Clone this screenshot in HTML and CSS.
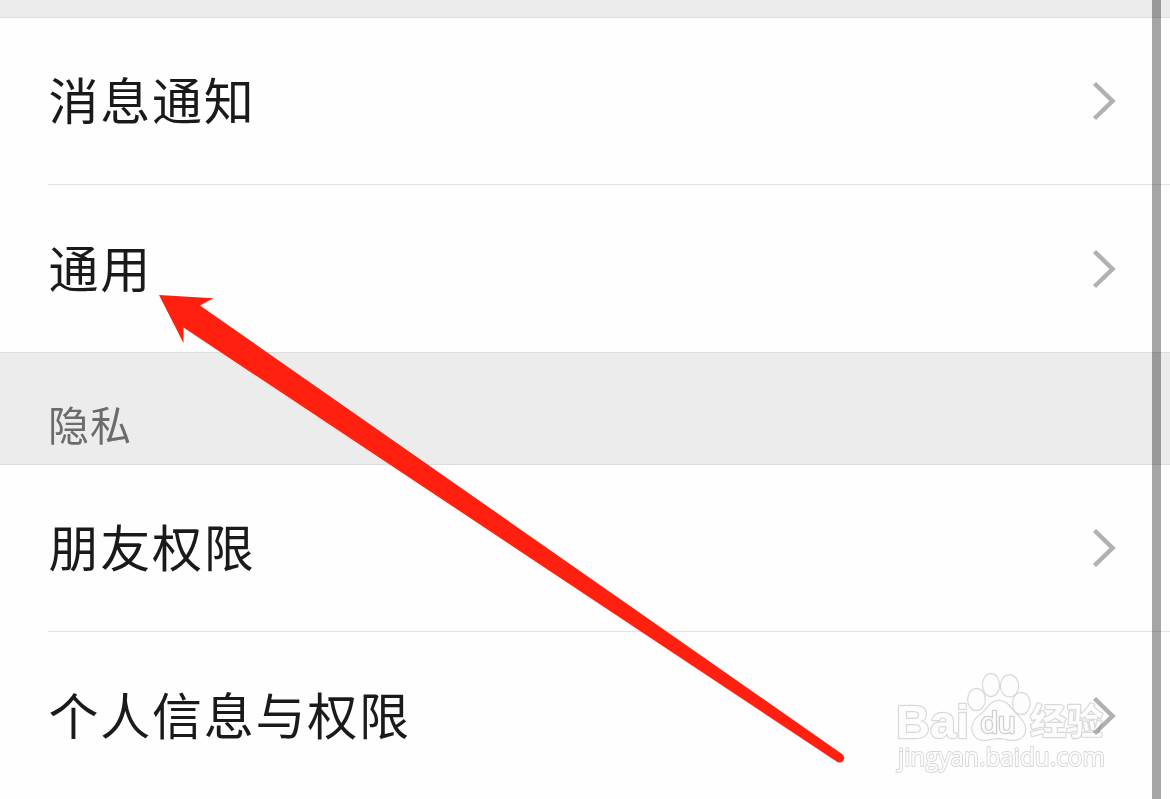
FILE: index.html
```html
<!DOCTYPE html>
<html lang="zh-CN">
<head>
  <meta charset="UTF-8" />
  <meta name="viewport" content="width=device-width, initial-scale=1.0"/>
  <title>设置</title>
  <link rel="stylesheet" href="styles.css">
</head>
<body>

  <div class="gap"></div>

  <ul class="list">
    <li class="row">
      <span class="label">消息通知</span>
      <svg class="chevron" viewBox="0 0 24 40"><path d="M2.5 2.5 L20.5 20 L2.5 37.5"/></svg>
    </li>
    <li class="row">
      <span class="label">通用</span>
      <svg class="chevron" viewBox="0 0 24 40"><path d="M2.5 2.5 L20.5 20 L2.5 37.5"/></svg>
    </li>
  </ul>

  <h2 class="section-title">隐私</h2>

  <ul class="list">
    <li class="row">
      <span class="label">朋友权限</span>
      <svg class="chevron" viewBox="0 0 24 40"><path d="M2.5 2.5 L20.5 20 L2.5 37.5"/></svg>
    </li>
    <li class="row">
      <span class="label">个人信息与权限</span>
      <svg class="chevron" viewBox="0 0 24 40"><path d="M2.5 2.5 L20.5 20 L2.5 37.5"/></svg>
    </li>
  </ul>

  <div class="scrollbar"></div>

  <!-- Pointer arrow -->
  <svg class="arrow" viewBox="0 0 1170 799">
    <path d="M159 295 L213.500 298.300 L200 305.500 L842 754 A4.500 4.500 0 0 1 837 761.800 L183.500 327.500 L183.500 343 Z"/>
  </svg>

  <!-- Watermark -->
  <svg class="watermark" viewBox="880 660 290 139">
    <text class="brand" x="896" y="738" textLength="73" lengthAdjust="spacingAndGlyphs">Bai</text>
    <g class="paw">
      <ellipse cx="976.500" cy="699.500" rx="8.300" ry="10.500"/>
      <ellipse cx="991" cy="685" rx="8" ry="11"/>
      <ellipse cx="1009.500" cy="685.800" rx="8.500" ry="10.500"/>
      <ellipse cx="1021.300" cy="703.500" rx="8.200" ry="10.500"/>
      <path d="M998.500 701 C991 701 988 708 983 713 C978 717 972 721 972.500 729 C973 738 981 741 988 739.500 C996 737.500 1002 737.500 1009 739.500 C1017 741 1024.500 738 1025 730 C1025.500 722 1019 718 1014 712 C1009 706 1006 701 998.500 701 Z"/>
    </g>
    <text class="du" x="980.500" y="733" textLength="35" lengthAdjust="spacingAndGlyphs">du</text>
    <text class="cn" x="1030" y="735" textLength="73" lengthAdjust="spacingAndGlyphs">经验</text>
    <text class="url" x="898" y="766" textLength="207" lengthAdjust="spacingAndGlyphs">jingyan.baidu.com</text>
  </svg>

</body>
</html>
```
FILE: styles.css
```css
* {
  box-sizing: border-box;
}

body {
  margin: 0;
  padding: 0;
  height: 799px;
  position: relative;
  background-color: #fefefe;
  color: #1a1a1a;
  font-family: "Noto Sans CJK SC", sans-serif;
  overflow: hidden;
}

.gap {
  height: 18px;
  background-color: #ececec;
  border-bottom: 1px solid #dedede;
}

.list {
  list-style: none;
  margin: 0;
  padding: 0 0 0 48px;
}

.row {
  display: flex;
  justify-content: space-between;
  align-items: center;
  height: 167px;
  padding-right: 54px;
  border-bottom: 1px solid #e3e3e3;
  font-size: 50px;
  line-height: 74px;
  letter-spacing: 1.75px;
}

.row:last-child {
  border-bottom: none;
}

.label {
  padding: 0 0 6px 0.5px;
}

.chevron {
  width: 24px;
  height: 40px;
}

.chevron path {
  fill: none;
  stroke: #b1b1b1;
  stroke-width: 4.5;
}

.section-title {
  margin: 0;
  height: 113px;
  padding: 40px 0 0 48px;
  background-color: #ececec;
  border-top: 1px solid #dedede;
  border-bottom: 1px solid #dedede;
  color: #6c6c6c;
  font-size: 41px;
  font-weight: 400;
  line-height: 60px;
  letter-spacing: 1px;
}

.scrollbar {
  position: absolute;
  top: 0;
  right: 9px;
  width: 9px;
  height: 100%;
  background-color: rgba(0, 0, 0, 0.35);
}

.arrow {
  position: absolute;
  top: 0;
  left: 0;
  width: 1170px;
  height: 799px;
}

.arrow path {
  fill: #ff2010;
}

.watermark {
  position: absolute;
  right: 0;
  bottom: 0;
  width: 290px;
  height: 139px;
  fill: #fefefe;
  stroke: #b4b4b4;
  stroke-width: 2.4;
  stroke-linejoin: round;
  paint-order: stroke;
  opacity: 0.5;
  mix-blend-mode: multiply;
  font-family: "Liberation Sans", sans-serif;
}

.brand {
  font-size: 47px;
  font-weight: 700;
}

.du {
  font-size: 29px;
  stroke: #a0a0a0;
}

.cn {
  font-family: "Noto Sans CJK SC", sans-serif;
  font-size: 36px;
  font-weight: 700;
}

.url {
  font-family: "Open Sans", sans-serif;
  font-size: 25px;
  stroke-width: 2;
}
```
